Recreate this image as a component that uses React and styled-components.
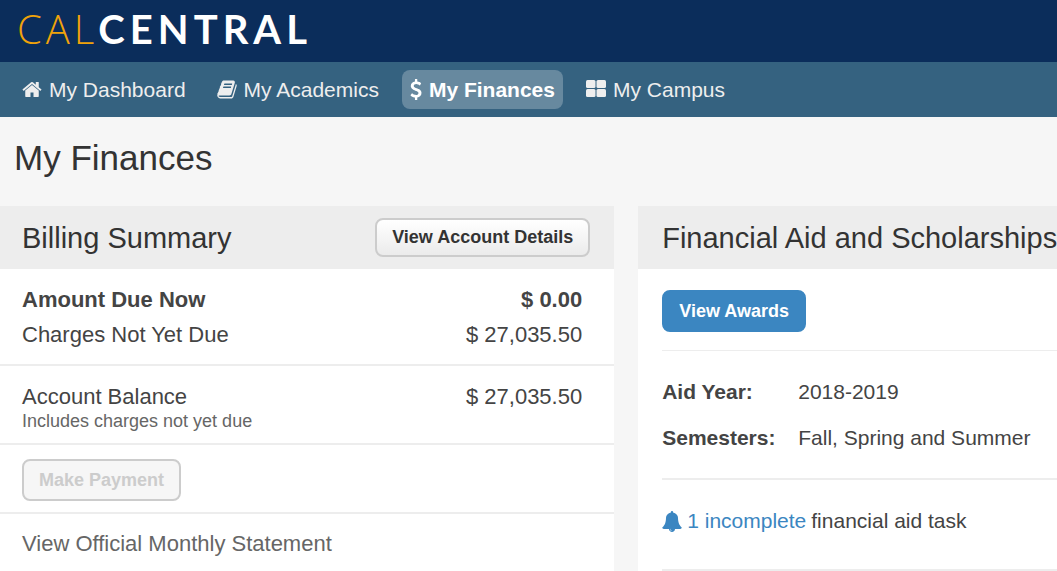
import React from "react";
import styled, { createGlobalStyle, css } from "styled-components";

const GlobalStyle = createGlobalStyle`
  *, *::before, *::after { box-sizing: border-box; }
  body {
    margin: 0;
    background: #f6f6f6;
    color: #444;
    font-family: "Liberation Sans", Arial, sans-serif;
    font-size: 21px;
  }
  h1, h2, p, dl, dd, ul { margin: 0; padding: 0; }
  h1, h2 { font-weight: 400; color: #333; }
`;

const Page = styled.div`
  display: flex;
  flex-direction: column;
  min-height: 100vh;
  overflow-x: hidden;
`;

const Header = styled.header`
  display: flex;
  align-items: center;
  height: 62px;
  padding: 0 17px 4px;
  background: #0b2d5b;
`;

const Logo = styled.a`
  display: flex;
  align-items: baseline;
  color: #fff;
  font-family: Lato, sans-serif;
  font-size: 40px;
  line-height: 58px;
  text-decoration: none;
`;

const LogoCal = styled.span`
  color: #f0a30a;
  font-family: "Open Sans", sans-serif;
  font-weight: 300;
  letter-spacing: 4px;
`;

const LogoCentral = styled.span`
  font-weight: 700;
  letter-spacing: 5px;
`;

const Nav = styled.nav`
  padding: 8px 14px;
  background: #356280;
`;

const NavList = styled.ul`
  display: flex;
  gap: 15px;
  list-style: none;
`;

const NavLink = styled.a`
  display: flex;
  align-items: center;
  gap: 7px;
  height: 39px;
  padding: 0 8px;
  border-radius: 8px;
  color: #eee;
  text-decoration: none;
  white-space: nowrap;
  ${(p) =>
    p.$active &&
    css`
      background: #67899f;
      color: #fff;
      font-weight: 700;
    `}
`;

const Glyph = styled.svg`
  flex: none;
  width: ${(p) => p.$width || 20}px;
  height: 21px;
  fill: currentColor;
`;

const PageTitle = styled.h1`
  padding: 21px 14px 28px;
  font-size: 35px;
  line-height: 40px;
`;

const Columns = styled.main`
  display: grid;
  flex: 1;
  grid-template-columns: minmax(0, 22fr) minmax(0, 15fr);
  gap: 24px;
`;

const Panel = styled.section`
  background: #fff;
`;

const PanelHeader = styled.header`
  display: flex;
  align-items: center;
  justify-content: space-between;
  height: 63px;
  padding-left: ${(p) => p.$inset}px;
  padding-right: ${(p) => p.$end || 0}px;
  background: #ededed;
`;

const PanelTitle = styled.h2`
  font-size: 29px;
  line-height: 32px;
  white-space: nowrap;
`;

const Button = styled.button`
  height: ${(p) => (p.$compact ? 39 : 42)}px;
  padding: 0 15px;
  border: 2px solid #ccc;
  border-radius: 8px;
  background: linear-gradient(#fff, #ebebeb);
  color: #333;
  font: 700 18px "Liberation Sans", Arial, sans-serif;
  white-space: nowrap;

  &:disabled {
    background: #f6f6f6;
    color: #ccc;
  }

  ${(p) =>
    p.$primary &&
    css`
      border-color: #3b86c1;
      background: #3b86c1;
      color: #fff;
    `}
`;

const Block = styled.div`
  padding: ${(p) => p.$pad};
  border-bottom: ${(p) => (p.$last ? 0 : 2)}px solid #ededed;
  font-size: 22px;
`;

const Amount = styled.div`
  display: flex;
  justify-content: space-between;
  line-height: ${(p) => p.$line}px;
  font-weight: ${(p) => (p.$strong ? 700 : 400)};
`;

const Note = styled.p`
  color: #666;
  font-size: 18px;
  line-height: 18px;
`;

const StatementLink = styled.a`
  color: #666;
  line-height: 28px;
  text-decoration: none;
`;

const AidBody = styled.div`
  padding-left: 24px;
`;

const AidBlock = styled.div`
  padding: ${(p) => p.$pad};
  border-bottom: ${(p) => p.$rule}px solid #ededed;
`;

const Facts = styled.dl`
  display: grid;
  grid-template-columns: 136px 1fr;
  line-height: 46px;
`;

const Term = styled.dt`
  font-weight: 700;
`;

const Task = styled.p`
  display: flex;
  align-items: center;
  gap: 5px;
  color: #444;
  line-height: 46px;
  white-space: nowrap;
`;

const TaskLink = styled.a`
  display: flex;
  align-items: center;
  gap: 5px;
  color: #3b86c1;
  text-decoration: none;
`;

const HomeIcon = () => (
  <Glyph viewBox="64 0 1664 1792" aria-hidden="true">
    <path d="M1472 992v480q0 26-19 45t-45 19h-384v-384h-256v384h-384q-26 0-45-19t-19-45v-480q0-1 .5-3t.5-3l575-474 575 474q1 2 1 6zm223-69l-62 74q-8 9-21 11h-3q-13 0-21-7l-692-577-692 577q-12 8-24 7-13-2-21-11l-62-74q-8-10-7-23.5t11-21.5l719-599q32-26 76-26t76 26l244 204v-195q0-14 9-23t23-9h192q14 0 23 9t9 23v408l219 182q10 8 11 21.5t-7 23.5z" />
  </Glyph>
);

const BookIcon = () => (
  <Glyph viewBox="64 0 1664 1792" aria-hidden="true">
    <path d="M1703 478q40 57 18 129l-275 906q-19 64-76.5 107.5t-122.5 43.5h-923q-77 0-148.5-53.5t-99.5-131.5q-24-67-2-127 0-4 3-27t4-37q1-8-3-21.5t-3-19.5q2-11 8-21t16.5-23.5 16.5-23.5q23-38 45-91.5t30-91.5q3-10 .5-30t-.5-28q3-11 17-28t17-23q21-36 42-92t25-90q1-9-2.5-32t.5-28q4-13 22-30.5t22-22.5q19-26 42.5-84.5t27.5-96.5q1-8-3-25.5t-2-26.5q2-8 9-18t18-23 17-21q8-12 16.5-30.5t15-35 16-36 19.5-32 26.5-23.5 36-11.5 47.5 5.5l-1 3q38-9 51-9h761q74 0 114 56t18 130l-274 906q-36 119-71.5 153.5t-128.5 34.5h-869q-27 0-38 15-11 16-1 43 24 70 144 70h923q29 0 56-15.5t35-41.5l300-987q7-22 5-57 38 15 59 43zm-1064 2q-4 13 2 22.5t20 9.5h608q13 0 25.5-9.5t16.5-22.5l21-64q4-13-2-22.5t-20-9.5h-608q-13 0-25.5 9.5t-16.5 22.5zm-83 256q-4 13 2 22.5t20 9.5h608q13 0 25.5-9.5t16.5-22.5l21-64q4-13-2-22.5t-20-9.5h-608q-13 0-25.5 9.5t-16.5 22.5z" />
  </Glyph>
);

const DollarIcon = () => (
  <Glyph viewBox="384 0 1024 1792" $width={12} aria-hidden="true">
    <path d="M1362 1185q0 153-99.5 263.5t-258.5 136.5v175q0 14-9 23t-23 9h-135q-13 0-22.5-9.5t-9.5-22.5v-175q-66-9-127.5-31t-101.5-44.5-74-48-46.5-37.5-17.5-18q-17-21-2-41l103-135q7-10 23-12 15-2 24 9l2 2q113 99 243 125 37 8 74 8 81 0 142.5-43t61.5-122q0-28-15-53t-33.5-42-58.5-37.5-66-32-80-32.5q-39-16-61.5-25t-61.5-26.5-62.5-31-56.5-35.5-53.5-42.5-43.5-49-35.5-58-21-66.5-8.5-78q0-138 98-242t255-134v-180q0-13 9.5-22.5t22.5-9.5h135q14 0 23 9t9 23v176q57 6 110.5 23t87 33.5 63.5 37.5 39 29 15 14q17 18 5 38l-81 146q-8 15-23 16-14 3-27-7-3-3-14.5-12t-39-26.5-58.5-32-74.5-26-85.5-11.5q-95 0-155 43t-60 111q0 26 8.5 48t29.5 41.5 39.5 33 56 31 60.5 27 70 27.5q53 20 81 31.5t76 35 75.5 42.5 62 50 53 63.5 31.5 76.5 13 94z" />
  </Glyph>
);

const GridIcon = () => (
  <Glyph viewBox="0 0 20 21" aria-hidden="true">
    <rect x="0" y="1" width="9.5" height="8" rx="1.5" />
    <rect x="10.5" y="1" width="9.5" height="8" rx="1.5" />
    <rect x="0" y="10" width="9.5" height="8" rx="1.5" />
    <rect x="10.5" y="10" width="9.5" height="8" rx="1.5" />
  </Glyph>
);

const BellIcon = () => (
  <Glyph viewBox="64 0 1664 1792" aria-hidden="true">
    <path d="M912 1696q0-16-16-16-59 0-101.5-42.5t-42.5-101.5q0-16-16-16t-16 16q0 73 51.5 124.5t124.5 51.5q16 0 16-16zm816-288q0 52-38 90t-90 38h-448q0 106-75 181t-181 75-181-75-75-181h-448q-52 0-90-38t-38-90q50-42 91-88t85-119.5 74.5-158.5 50-206 19.5-260q0-152 117-282.5t307-158.5q-8-19-8-39 0-40 28-68t68-28 68 28 28 68q0 20-8 39 190 28 307 158.5t117 282.5q0 139 19.5 260t50 206 74.5 158.5 85 119.5 91 88z" />
  </Glyph>
);

const navItems = [
  { label: "My Dashboard", Icon: HomeIcon },
  { label: "My Academics", Icon: BookIcon },
  { label: "My Finances", Icon: DollarIcon, active: true },
  { label: "My Campus", Icon: GridIcon },
];

export default function App() {
  return (
    <Page>
      <GlobalStyle />
      <Header>
        <Logo href="#home">
          <LogoCal>CAL</LogoCal>
          <LogoCentral>CENTRAL</LogoCentral>
        </Logo>
      </Header>
      <Nav aria-label="Main">
        <NavList>
          {navItems.map(({ label, Icon, active }) => (
            <li key={label}>
              <NavLink
                href="#nav"
                $active={active}
                aria-current={active ? "page" : undefined}
              >
                <Icon />
                {label}
              </NavLink>
            </li>
          ))}
        </NavList>
      </Nav>
      <PageTitle>My Finances</PageTitle>
      <Columns>
        <Panel>
          <PanelHeader $inset={22} $end={24}>
            <PanelTitle>Billing Summary</PanelTitle>
            <Button type="button" $compact>
              View Account Details
            </Button>
          </PanelHeader>
          <Block as="dl" $pad="13px 32px 12px 22px">
            <Amount $line={35} $strong>
              <dt>Amount Due Now</dt>
              <dd>$ 0.00</dd>
            </Amount>
            <Amount $line={35}>
              <dt>Charges Not Yet Due</dt>
              <dd>$ 27,035.50</dd>
            </Amount>
          </Block>
          <Block $pad="16px 32px 13px 22px">
            <dl>
              <Amount $line={30}>
                <dt>Account Balance</dt>
                <dd>$ 27,035.50</dd>
              </Amount>
            </dl>
            <Note>Includes charges not yet due</Note>
          </Block>
          <Block $pad="14px 22px 11px">
            <Button type="button" disabled>
              Make Payment
            </Button>
          </Block>
          <Block $pad="16px 22px 13px" $last>
            <StatementLink href="#statement">
              View Official Monthly Statement
            </StatementLink>
          </Block>
        </Panel>
        <Panel>
          <PanelHeader $inset={24}>
            <PanelTitle>Financial Aid and Scholarships</PanelTitle>
          </PanelHeader>
          <AidBody>
            <AidBlock $pad="21px 0 18px" $rule={1}>
              <Button type="button" $primary>
                View Awards
              </Button>
            </AidBlock>
            <AidBlock $pad="18px 0 17px" $rule={2}>
              <Facts>
                <Term>Aid Year:</Term>
                <dd>2018-2019</dd>
                <Term>Semesters:</Term>
                <dd>Fall, Spring and Summer</dd>
              </Facts>
            </AidBlock>
            <AidBlock $pad="18px 0 25px" $rule={2}>
              <Task>
                <TaskLink href="#tasks">
                  <BellIcon />1 incomplete
                </TaskLink>
                <span>financial aid task</span>
              </Task>
            </AidBlock>
          </AidBody>
        </Panel>
      </Columns>
    </Page>
  );
}
